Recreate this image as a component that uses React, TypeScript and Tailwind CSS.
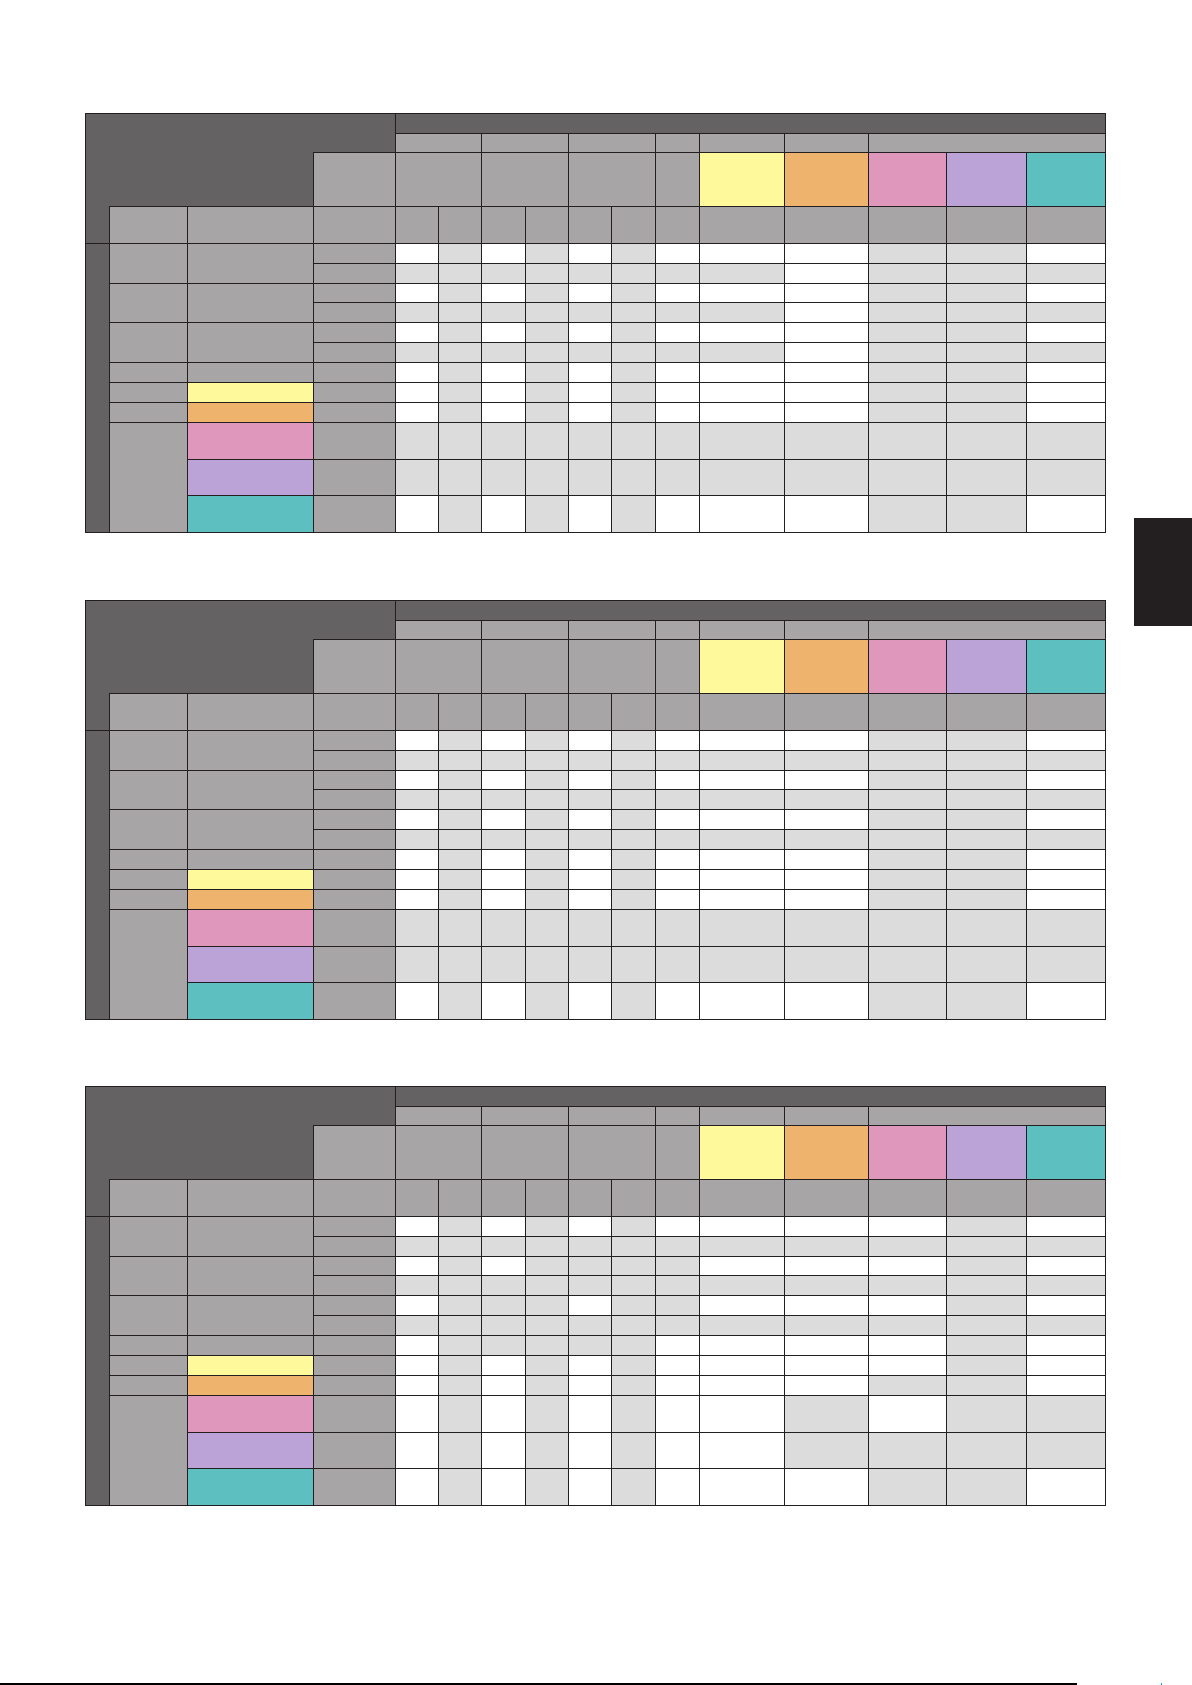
const DARK = "bg-[#656263]";
const MID = "bg-[#a7a5a6]";
const LIGHT = "bg-[#dcdcdc]";

const COL = [
  "col-start-1", "col-start-2", "col-start-3", "col-start-4",
  "col-start-5", "col-start-6", "col-start-7", "col-start-8",
  "col-start-9", "col-start-10", "col-start-11", "col-start-12",
  "col-start-13", "col-start-14", "col-start-15", "col-start-16",
];
const ROW = [
  "row-start-1", "row-start-2", "row-start-3", "row-start-4",
  "row-start-5", "row-start-6", "row-start-7", "row-start-8",
  "row-start-9", "row-start-10", "row-start-11", "row-start-12",
  "row-start-13", "row-start-14", "row-start-15", "row-start-16",
];

// W = white cell, G = light gray cell; 12 body rows x 12 value columns
const TABLE_1 = [
  "WGWGWGWWWGGW",
  "GGGGGGGGWGGG",
  "WGWGWGWWWGGW",
  "GGGGGGGGWGGG",
  "WGWGWGWWWGGW",
  "GGGGGGGGWGGG",
  "WGWGWGWWWGGW",
  "WGWGWGWWWGGW",
  "WGWGWGWWWGGW",
  "GGGGGGGGGGGG",
  "GGGGGGGGGGGG",
  "WGWGWGWWWGGW",
];

const TABLE_2 = [
  "WGWGWGWWWGGW",
  "GGGGGGGGGGGG",
  "WGWGWGWWWGGW",
  "GGGGGGGGGGGG",
  "WGWGWGWWWGGW",
  "GGGGGGGGGGGG",
  "WGWGWGWWWGGW",
  "WGWGWGWWWGGW",
  "WGWGWGWWWGGW",
  "GGGGGGGGGGGG",
  "GGGGGGGGGGGG",
  "WGWGWGWWWGGW",
];

const TABLE_3 = [
  "WGWGWGWWWWGW",
  "GGGGGGGGGGGG",
  "WGWGGGGWWWGW",
  "GGGGGGGGGGGG",
  "WGGGWGGWWWGW",
  "GGGGGGGGGGGG",
  "WGGGGGWWWWGW",
  "WGWGWGWWWWGW",
  "WGWGWGWWWGGW",
  "WGWGWGWWGWGG",
  "WGWGWGWWGGGG",
  "WGWGWGWWWGGW",
];

function ChartTable({ pattern }: { pattern: string[] }) {
  return (
    <div className="grid w-[1021px] gap-px bg-[#231f20] p-px grid-cols-[23px_77px_125px_81px_42px_42px_43px_42px_42px_43px_43px_84px_83px_77px_79px_78px] grid-rows-[19px_18px_53px_36px_19px_19px_18px_19px_19px_19px_19px_19px_19px_36px_35px_36px]">
      {/* top-left dark block (L shape) */}
      <div className={`col-start-1 col-end-2 row-start-1 row-end-5 ${DARK}`} />
      <div className={`col-start-1 col-end-4 row-start-1 row-end-4 ${DARK}`} />
      <div className={`col-start-1 col-end-5 row-start-1 row-end-3 ${DARK}`} />

      {/* header band */}
      <div className={`col-start-5 col-end-17 row-start-1 row-end-2 ${DARK}`} />

      {/* header row 2 */}
      <div className={`col-start-5 col-end-7 row-start-2 ${MID}`} />
      <div className={`col-start-7 col-end-9 row-start-2 ${MID}`} />
      <div className={`col-start-9 col-end-11 row-start-2 ${MID}`} />
      <div className={`col-start-11 col-end-12 row-start-2 ${MID}`} />
      <div className={`col-start-12 col-end-13 row-start-2 ${MID}`} />
      <div className={`col-start-13 col-end-14 row-start-2 ${MID}`} />
      <div className={`col-start-14 col-end-17 row-start-2 ${MID}`} />

      {/* header row 3 */}
      <div className={`col-start-4 col-end-5 row-start-3 ${MID}`} />
      <div className={`col-start-5 col-end-7 row-start-3 ${MID}`} />
      <div className={`col-start-7 col-end-9 row-start-3 ${MID}`} />
      <div className={`col-start-9 col-end-11 row-start-3 ${MID}`} />
      <div className={`col-start-11 col-end-12 row-start-3 ${MID}`} />
      <div className="col-start-12 row-start-3 bg-[#fef99a]" />
      <div className="col-start-13 row-start-3 bg-[#eeb46e]" />
      <div className="col-start-14 row-start-3 bg-[#df97bb]" />
      <div className="col-start-15 row-start-3 bg-[#bba3d8]" />
      <div className="col-start-16 row-start-3 bg-[#5dbfc0]" />

      {/* header row 4 */}
      {COL.slice(1).map((c) => (
        <div key={c} className={`${c} row-start-4 ${MID}`} />
      ))}

      {/* body: left columns */}
      <div className={`col-start-1 row-start-5 row-end-17 ${DARK}`} />

      <div className={`col-start-2 row-start-5 row-end-7 ${MID}`} />
      <div className={`col-start-2 row-start-7 row-end-9 ${MID}`} />
      <div className={`col-start-2 row-start-9 row-end-11 ${MID}`} />
      <div className={`col-start-2 row-start-11 ${MID}`} />
      <div className={`col-start-2 row-start-12 ${MID}`} />
      <div className={`col-start-2 row-start-13 ${MID}`} />
      <div className={`col-start-2 row-start-14 row-end-17 ${MID}`} />

      <div className={`col-start-3 row-start-5 row-end-7 ${MID}`} />
      <div className={`col-start-3 row-start-7 row-end-9 ${MID}`} />
      <div className={`col-start-3 row-start-9 row-end-11 ${MID}`} />
      <div className={`col-start-3 row-start-11 ${MID}`} />
      <div className="col-start-3 row-start-12 bg-[#fef99a]" />
      <div className="col-start-3 row-start-13 bg-[#eeb46e]" />
      <div className="col-start-3 row-start-14 bg-[#df97bb]" />
      <div className="col-start-3 row-start-15 bg-[#bba3d8]" />
      <div className="col-start-3 row-start-16 bg-[#5dbfc0]" />

      {ROW.slice(4).map((r) => (
        <div key={r} className={`col-start-4 ${r} ${MID}`} />
      ))}

      {/* body: value cells */}
      {pattern.map((line, ri) =>
        line.split("").map((v, ci) => (
          <div
            key={`${ri}-${ci}`}
            className={`${COL[ci + 4]} ${ROW[ri + 4]} ${v === "W" ? "bg-white" : LIGHT}`}
          />
        ))
      )}
    </div>
  );
}

export default function App() {
  return (
    <div className="flex h-[1685px] w-[1192px] flex-col bg-white">
      <div className="flex">
        <div className="flex flex-col pl-[85px] pt-[113px]">
          <ChartTable pattern={TABLE_1} />
          <div className="mt-[67px]">
            <ChartTable pattern={TABLE_2} />
          </div>
          <div className="mt-[66px]">
            <ChartTable pattern={TABLE_3} />
          </div>
        </div>
        {/* thumb index tab */}
        <div className="ml-[28px] mt-[518px] h-[108px] w-[58px] bg-[#231f20]" />
      </div>

      {/* footer rule */}
      <div className="mt-auto flex items-end">
        <div className="h-[2px] w-[1077px] bg-black" />
        <div className="ml-[84px] h-[2px] w-px bg-[#00aeef]" />
      </div>
    </div>
  );
}
